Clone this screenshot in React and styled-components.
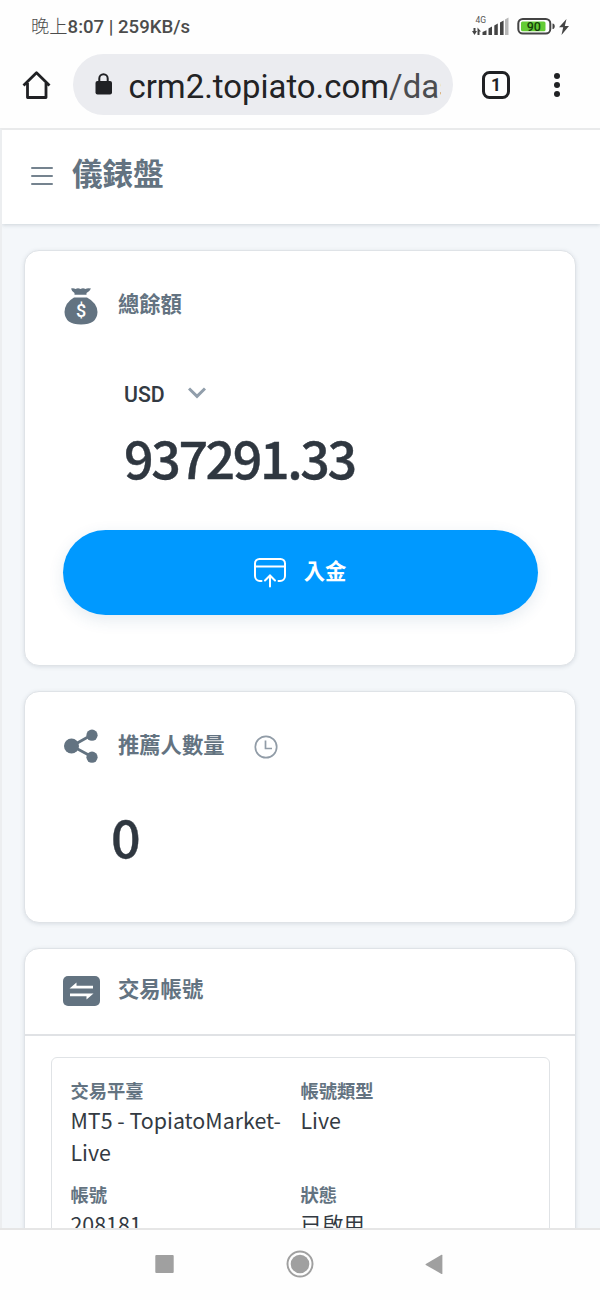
import React from "react";
import styled, { createGlobalStyle } from "styled-components";

const GlobalStyle = createGlobalStyle`
  * { box-sizing: border-box; }
  body { margin: 0; background: #fff; }
  svg { display: block; flex: none; }
`;

const slate = "#637381";
const ink = "#2f3740";
const cjk = `"Noto Sans CJK TC", sans-serif`;

const Screen = styled.div`
  width: 600px;
  height: 1300px;
  display: flex;
  flex-direction: column;
  overflow: hidden;
  background: #fefefe;
  font-family: ${cjk};
  color: ${ink};
`;

const StatusBar = styled.div`
  height: 54px;
  flex: none;
  display: flex;
  align-items: center;
  justify-content: space-between;
  padding: 0 30px 0 31px;
`;

const Clock = styled.span`
  font: 500 18.6px/24px Roboto, "Noto Sans CJK TC", sans-serif;
  color: #4c4c4c;
  white-space: pre;
`;

const ClockPeriod = styled.span`
  font-size: 18.3px;
  font-weight: 300;
`;

const BrowserBar = styled.div`
  height: 74px;
  flex: none;
  display: flex;
  align-items: flex-start;
  padding-left: 21px;
`;

const HomeSlot = styled.div`
  width: 52px;
  padding-top: 16px;
`;

const AddressPill = styled.div`
  width: 380px;
  height: 61px;
  border-radius: 31px;
  background: #ebecf0;
  display: flex;
  align-items: center;
  padding: 0 12px 0 22px;
  gap: 16.5px;
`;

const Address = styled.div`
  flex: 1;
  overflow: hidden;
  white-space: nowrap;
  font: 400 32.9px/40px Roboto, sans-serif;
  color: #222325;
  padding-top: 4px;
`;

const Path = styled.span`
  color: #4b4d50;
`;

const TabCount = styled.div`
  width: 28px;
  height: 28px;
  margin: 17px 0 0 29px;
  border: 3px solid #202124;
  border-radius: 7.5px;
  display: flex;
  align-items: center;
  justify-content: center;
  font: 700 17.5px/20px Roboto, sans-serif;
  color: #202124;
`;

const MenuDots = styled.div`
  display: flex;
  flex-direction: column;
  gap: 3px;
  margin: 19px 0 0 44px;
`;

const Dot = styled.i`
  width: 6px;
  height: 6px;
  border-radius: 50%;
  background: #202124;
`;

const Page = styled.main`
  height: 1100px;
  flex: none;
  overflow: hidden;
  border-top: 2px solid #e9eaeb;
  border-left: 2px solid #eceef0;
  background: #f4f7fa;
`;

const Header = styled.header`
  height: 94px;
  background: #fff;
  display: flex;
  align-items: center;
  gap: 19px;
  padding: 0 0 10px 29px;
  box-shadow: 0 1px 4px rgba(70, 85, 100, 0.22);
`;

const Burger = styled.div`
  width: 22px;
  display: flex;
  flex-direction: column;
  gap: 6px;
  padding-top: 8px;
`;

const BurgerLine = styled.i`
  height: 2px;
  border-radius: 1px;
  background: #75838f;
`;

const PageTitle = styled.h1`
  margin: 0;
  font-size: 30.6px;
  line-height: 44px;
  font-weight: 700;
  color: ${slate};
`;

const Cards = styled.div`
  display: flex;
  flex-direction: column;
  gap: 25px;
  padding: 26px 24px 0 22px;
`;

const Card = styled.section`
  height: ${(p) => p.$height}px;
  flex: none;
  background: #fff;
  border: 1px solid #dfe3e7;
  border-radius: 15px;
  box-shadow: 0 1px 4px rgba(60, 80, 100, 0.15);
`;

const CardHead = styled.div`
  height: ${(p) => p.$height}px;
  display: flex;
  align-items: center;
  padding-left: 37.5px;
  border-bottom: ${(p) => (p.$ruled ? "2px solid #e0e2e5" : "0")};
`;

const HeadIcon = styled.div`
  width: 55.5px;
  padding-top: ${(p) => p.$drop || 0}px;
  padding-bottom: ${(p) => p.$lift || 0}px;
`;

const CardTitle = styled.h2`
  margin: 0;
  padding-bottom: ${(p) => p.$lift}px;
  font-size: 21.3px;
  line-height: 32px;
  font-weight: 700;
  color: ${slate};
`;

const ClockSlot = styled.div`
  margin: 2px 0 0 29.5px;
`;

const Currency = styled.div`
  display: flex;
  align-items: center;
  gap: 23px;
  margin: 22px 0 0 99px;
  height: 28px;
  font: 500 21.3px/28px Roboto, sans-serif;
  color: #333a42;
`;

const CurrencyCode = styled.span`
  padding-top: 2px;
`;

const ChevronSlot = styled.span`
  padding-bottom: 2px;
`;

const Amount = styled.div`
  margin-left: ${(p) => p.$left}px;
  margin-top: ${(p) => p.$top}px;
  height: 72px;
  font-size: 52px;
  line-height: 72px;
  font-weight: 500;
  letter-spacing: -2.45px;
  -webkit-text-stroke: 0.4px ${ink};
`;

const DepositButton = styled.button`
  display: flex;
  align-items: center;
  justify-content: center;
  gap: 18px;
  width: 475px;
  height: 85px;
  margin: ${(p) => p.$top}px 0 0 38px;
  padding: 0 1px 2px 0;
  border: 0;
  border-radius: 43px;
  background: #0099ff;
  color: #fff;
  font: 700 21.3px/32px ${cjk};
  box-shadow: 0 5px 16px rgba(40, 90, 130, 0.12);
`;

const ButtonText = styled.span`
  padding-bottom: 3px;
`;

const Account = styled.div`
  margin: 21px 25px 0 25.5px;
  height: 260px;
  border: 1px solid #e0e3e6;
  border-radius: 6px;
  padding: 16px 0 0 19px;
  display: grid;
  grid-template-columns: 230px 1fr;
  grid-template-rows: 104px 104px;
`;

const FieldLabel = styled.div`
  font-size: 18.3px;
  line-height: 32px;
  font-weight: 700;
  color: ${slate};
`;

const FieldValue = styled.div`
  font-size: 21.4px;
  line-height: 32px;
  margin-top: -2px;
  color: #333a42;
`;

const NavBar = styled.nav`
  flex: 1;
  border-top: 2px solid #e6e6e6;
  display: flex;
  justify-content: space-between;
  align-items: center;
  padding: 0 157px 2px 155px;
`;

function Field({ label, children }) {
  return (
    <div>
      <FieldLabel>{label}</FieldLabel>
      <FieldValue>{children}</FieldValue>
    </div>
  );
}

const StatusIcons = () => (
  <svg width="98" height="24" viewBox="0 0 98 24">
    <text x="3.500" y="8" fontFamily="Roboto, sans-serif" fontSize="8.500" fill="#555">4G</text>
    <g fill="#444">
      <path d="M1.500 13h2v3h1.500l-2.500 4L0 16h1.500zM5.500 20v-7.500l3.500 4H7.500V20z" />
      <path d="M10.500 20v-3l4-1.800V20zM16.500 20v-6.500l3.500-2V20zM22.300 20V10.500l3.500-2V20zM28 20V7.500l3.600-2V20z" />
    </g>
    <path d="M33 20V4.500l3.500-2V20z" fill="#b7b7b7" />
    <rect x="46.300" y="4" width="32" height="14.500" rx="4.500" fill="none" stroke="#444" strokeWidth="2" />
    <rect x="49" y="6.500" width="24.500" height="9.800" rx="1.500" fill="#63cc35" />
    <text x="61.800" y="16" textAnchor="middle" fontFamily="Roboto, sans-serif" fontSize="12.500" fontWeight="500" fill="#173f0c">90</text>
    <path d="M80.500 8.500q2.200 0 2.200 2.800t-2.200 2.800z" fill="#444" />
    <path d="M94.500 4L87 12.300h4.200L89.500 20 97 11h-4.200z" fill="#444" />
  </svg>
);

const HomeIcon = () => (
  <svg width="30" height="30" viewBox="0 0 30 30" fill="none" stroke="#202124" strokeWidth="2.800" strokeLinejoin="round">
    <path d="M2.500 15.500L15.500 2.800l13 12.700M6.500 13v14.500h18.500V13" />
  </svg>
);

const LockIcon = () => (
  <svg width="17" height="23" viewBox="0 0 17 23">
    <rect x="0.500" y="8" width="16.500" height="13.500" rx="2" fill="#202124" />
    <path d="M4.300 9V5.500a4.200 4.200 0 0 1 8.400 0V9" fill="none" stroke="#202124" strokeWidth="2" />
  </svg>
);

const MoneyBag = () => (
  <svg width="36" height="38" viewBox="0 0 36 38">
    <path d="M8 1.500q3-.5 4.500.500Q15 .500 17.500 2 20 .500 22.500 2 24 .800 28 1.500q-1 2.500-4.500 4.500v1.800h-12V6Q8.500 4 8 1.500z" fill={slate} />
    <path d="M11 10.500h13q10 5.200 10.500 14.500Q34 37.500 18 37.500T1.500 25Q2 15.500 11 10.500z" fill={slate} />
    <text x="18" y="30" textAnchor="middle" fontFamily="Roboto, sans-serif" fontWeight="500" fontSize="18" fill="#fff">$</text>
  </svg>
);

const Chevron = () => (
  <svg width="18" height="12" viewBox="0 0 18 12" fill="none" stroke="#919eab" strokeWidth="3">
    <path d="M1 1.500l8 7.800 8-7.800" />
  </svg>
);

const DepositIcon = () => (
  <svg width="32" height="32" viewBox="0 0 32 32" fill="none" stroke="#fff" strokeWidth="2" strokeLinecap="round">
    <path d="M7.500 25H6a5 5 0 0 1-5-5V7.500A4.500 4.500 0 0 1 5.500 3h21A4.500 4.500 0 0 1 31 7.500V20a5 5 0 0 1-5 5h-1.500M1 10.500h30" />
    <path d="M16 30.500v-11M11 24.500l5-5 5 5" />
  </svg>
);

const ShareIcon = () => (
  <svg width="36" height="36" viewBox="0 0 36 36" fill={slate}>
    <path d="M28.500 7L9 18l19.500 10.500" fill="none" stroke={slate} strokeWidth="2.800" />
    <circle cx="8.500" cy="18" r="7.500" />
    <circle cx="29" cy="7.200" r="5.600" />
    <circle cx="29" cy="29.200" r="5.600" />
  </svg>
);

const ClockIcon = () => (
  <svg width="24" height="24" viewBox="0 0 24 24" fill="none" stroke="#919ca7" strokeWidth="1.700">
    <circle cx="12" cy="12" r="10.700" />
    <path d="M11.500 5.500v8H18" />
  </svg>
);

const TransferIcon = () => (
  <svg width="37" height="30" viewBox="0 0 37 30">
    <rect width="37" height="30" rx="5" fill={slate} />
    <path d="M6.500 12.500l7-6v3.300h16.500v2.700zM30.500 17.500l-7 6v-3.300H7v-2.700z" fill="#fff" />
  </svg>
);

const RecentsIcon = () => (
  <svg width="19" height="20" viewBox="0 0 19 20">
    <rect x="0.300" y="1" width="18.400" height="18" rx="1" fill="#a0a0a0" />
  </svg>
);

const NavHomeIcon = () => (
  <svg width="28" height="28" viewBox="0 0 28 28">
    <circle cx="14" cy="14" r="12.500" fill="none" stroke="#a0a0a0" strokeWidth="2" />
    <circle cx="14" cy="14" r="9.300" fill="#a0a0a0" />
  </svg>
);

const BackIcon = () => (
  <svg width="18" height="21" viewBox="0 0 18 21">
    <path d="M.8 10L16.500.800q.9-.4.900.600v18q0 1-.9.500L.8 11q-.6-.5 0-1z" fill="#a0a0a0" />
  </svg>
);

export default function App() {
  return (
    <Screen>
      <GlobalStyle />
      <StatusBar>
        <Clock><ClockPeriod>晚上</ClockPeriod>8:07 | 259KB/s</Clock>
        <StatusIcons />
      </StatusBar>
      <BrowserBar>
        <HomeSlot><HomeIcon /></HomeSlot>
        <AddressPill>
          <LockIcon />
          <Address>crm2.topiato.com<Path>/das</Path></Address>
        </AddressPill>
        <TabCount>1</TabCount>
        <MenuDots><Dot /><Dot /><Dot /></MenuDots>
      </BrowserBar>

      <Page>
        <Header>
          <Burger><BurgerLine /><BurgerLine /><BurgerLine /></Burger>
          <PageTitle>儀錶盤</PageTitle>
        </Header>
        <Cards>
          <Card $height={416}>
            <CardHead $height={107}>
              <HeadIcon $drop={2}><MoneyBag /></HeadIcon>
              <CardTitle $lift={4}>總餘額</CardTitle>
            </CardHead>
            <Currency>
              <CurrencyCode>USD</CurrencyCode>
              <ChevronSlot><Chevron /></ChevronSlot>
            </Currency>
            <Amount $left={99} $top={13}>937291.33</Amount>
            <DepositButton $top={37}>
              <DepositIcon />
              <ButtonText>入金</ButtonText>
            </DepositButton>
          </Card>

          <Card $height={232}>
            <CardHead $height={108}>
              <HeadIcon><ShareIcon /></HeadIcon>
              <CardTitle $lift={4}>推薦人數量</CardTitle>
              <ClockSlot><ClockIcon /></ClockSlot>
            </CardHead>
            <Amount $left={86} $top={0}>0</Amount>
          </Card>

          <Card $height={420}>
            <CardHead $height={87} $ruled>
              <HeadIcon $lift={1}><TransferIcon /></HeadIcon>
              <CardTitle $lift={7}>交易帳號</CardTitle>
            </CardHead>
            <Account>
              <Field label="交易平臺">MT5 - TopiatoMarket-<br />Live</Field>
              <Field label="帳號類型">Live</Field>
              <Field label="帳號">208181</Field>
              <Field label="狀態">已啟用</Field>
            </Account>
          </Card>
        </Cards>
      </Page>

      <NavBar>
        <RecentsIcon />
        <NavHomeIcon />
        <BackIcon />
      </NavBar>
    </Screen>
  );
}
